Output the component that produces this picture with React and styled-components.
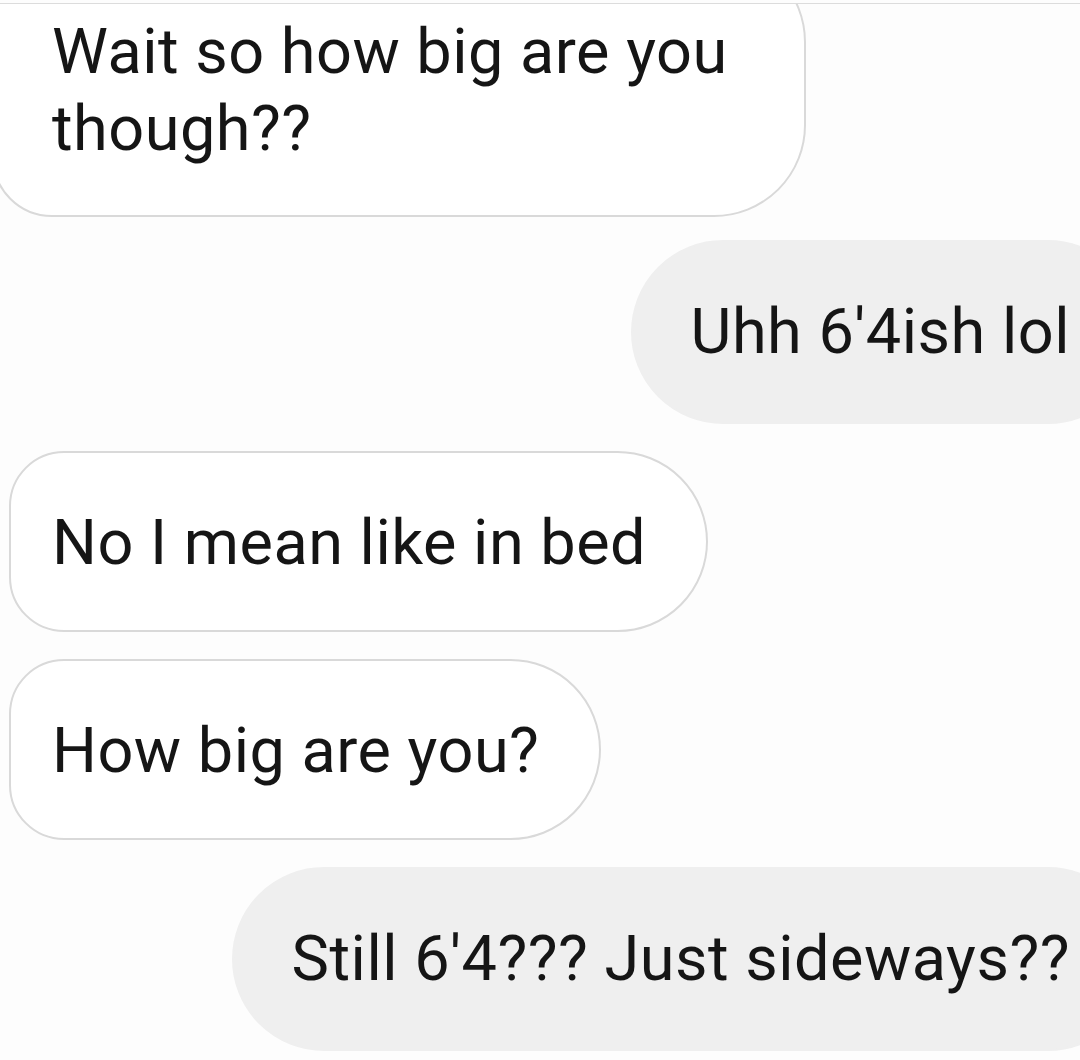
import React from "react";
import styled, { createGlobalStyle, css } from "styled-components";

const Global = createGlobalStyle`
  html, body {
    margin: 0;
    padding: 0;
    background: #fdfdfd;
    overflow: hidden;
  }
  body {
    font-family: Roboto, "Noto Sans", "Liberation Sans", sans-serif;
  }
`;

const Screen = styled.div`
  margin-top: 3px;
  height: 1056px;
  border-top: 1px solid #dcdcdc;
  overflow: hidden;
  display: flex;
  flex-direction: column;
  gap: 27px;
  background: #fdfdfd;
`;

const Bubble = styled.div`
  box-sizing: border-box;
  font-size: 63px;
  line-height: 77px;
  color: #151515;
  letter-spacing: 0.5px;
  white-space: nowrap;
  ${(p) =>
    p.$sent
      ? css`
          align-self: flex-end;
          margin-right: -60px;
          background: #efefef;
          border: 2px solid #efefef;
          border-radius: 92px;
          padding: 51px 68px 52px 58px;
        `
      : css`
          align-self: flex-start;
          margin-left: 9px;
          background: #ffffff;
          border: 2px solid #d9d9d9;
          border-radius: 56px 92px 92px 56px;
          padding: 51px 60px 49px 41px;
        `}
`;

const FirstBubble = styled(Bubble)`
  margin-top: -54px;
  margin-left: -8px;
  margin-bottom: -4px;
  width: 814px;
  white-space: normal;
  padding: 61px 70px 48px 58px;
  border-radius: 60px 92px 92px 60px;
`;

export default function App() {
  return (
    <>
      <Global />
      <Screen>
        <FirstBubble>Wait so how big are you though??</FirstBubble>
        <Bubble $sent>Uhh 6'4ish lol</Bubble>
        <Bubble>No I mean like in bed</Bubble>
        <Bubble>How big are you?</Bubble>
        <Bubble $sent>Still 6'4??? Just sideways??</Bubble>
      </Screen>
    </>
  );
}
